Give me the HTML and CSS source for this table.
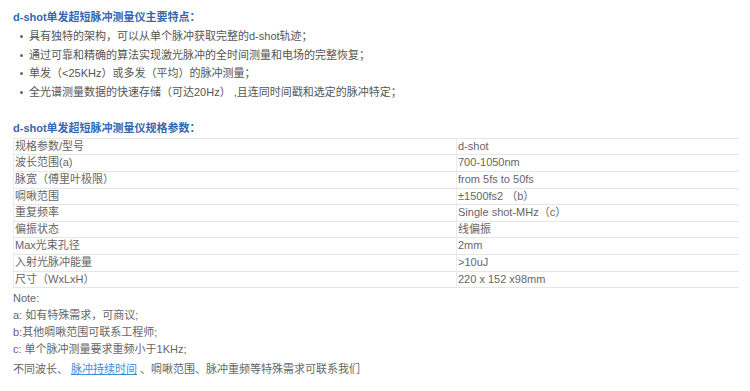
FILE: index.html
```html
<!DOCTYPE html>
<html>
<head>
<meta charset="utf-8">
<link rel="stylesheet" href="styles.css">
</head>
<body>
<div class="page">
  <h3 class="title first">d-shot单发超短脉冲测量仪主要特点：</h3>
  <ul class="features">
    <li>具有独特的架构，可以从单个脉冲获取完整的d-shot轨迹；</li>
    <li>通过可靠和精确的算法实现激光脉冲的全时间测量和电场的完整恢复；</li>
    <li>单发（&lt;25KHz）或多发（平均）的脉冲测量；</li>
    <li>全光谱测量数据的快速存储（可达20Hz） ,且连同时间戳和选定的脉冲特定；</li>
  </ul>
  <h3 class="title second">d-shot单发超短脉冲测量仪规格参数：</h3>
  <table class="specs">
    <tr><td class="k">规格参数/型号</td><td class="v">d-shot</td></tr>
    <tr><td class="k">波长范围(a)</td><td class="v">700-1050nm</td></tr>
    <tr><td class="k">脉宽（傅里叶极限）</td><td class="v">from 5fs to 50fs</td></tr>
    <tr><td class="k">啁啾范围</td><td class="v">±1500fs2 （b）</td></tr>
    <tr><td class="k">重复频率</td><td class="v">Single shot-MHz（c）</td></tr>
    <tr><td class="k">偏振状态</td><td class="v">线偏振</td></tr>
    <tr><td class="k">Max光束孔径</td><td class="v">2mm</td></tr>
    <tr><td class="k">入射光脉冲能量</td><td class="v">&gt;10uJ</td></tr>
    <tr><td class="k">尺寸（WxLxH）</td><td class="v">220 x 152 x98mm</td></tr>
  </table>
  <div class="notes">
    <p>Note:</p>
    <p>a: 如有特殊需求，可商议;</p>
    <p>b:其他啁啾范围可联系工程师;</p>
    <p>c: 单个脉冲测量要求重频小于1KHz;</p>
    <p class="last">不同波长、 <a href="#">脉冲持续时间</a> 、啁啾范围、脉冲重频等特殊需求可联系我们</p>
  </div>
</div>
</body>
</html>
```

FILE: styles.css
```css
html, body {
  margin: 0;
  padding: 0;
  background: #ffffff;
}
body {
  font-family: "Liberation Sans", Arial, "Noto Sans CJK SC", sans-serif;
  font-size: 11px;
  color: #5a5a5a;
}
.page {
  padding: 8px 0 0 13px;
  width: 726px;
}
.title {
  margin: 0;
  font-size: 11px;
  line-height: 19px;
  font-weight: bold;
  color: #3466b2;
}
.title.second {
  margin-top: 17px;
}
.features {
  list-style: none;
  margin: 0;
  padding: 0 0 0 16px;
}
.features li {
  position: relative;
  line-height: 18.7px;
  color: #555555;
}
.features li::before {
  content: "";
  position: absolute;
  left: -9px;
  top: 8px;
  width: 3px;
  height: 3px;
  border-radius: 50%;
  background: #666666;
}
.specs {
  width: 726px;
  border-collapse: collapse;
  margin-top: 0;
  color: #666666;
}
.specs td {
  padding: 0 0 0 1px;
  height: 15.6px;
  line-height: 15.6px;
  border-top: 1px solid #e6e6e6;
  border-bottom: 1px solid #e6e6e6;
  vertical-align: middle;
}
.specs td.k {
  width: 441px;
  border-left: 1px solid #ececec;
}
.specs td.v {
  border-left: 1px solid #ececec;
}
.notes {
  margin-top: 2px;
  color: #666666;
}
.notes p {
  margin: 0;
  line-height: 17px;
}
.notes p.last {
  margin-top: 3px;
}
.notes a {
  color: #3a8ed8;
  text-decoration: underline;
}
```
